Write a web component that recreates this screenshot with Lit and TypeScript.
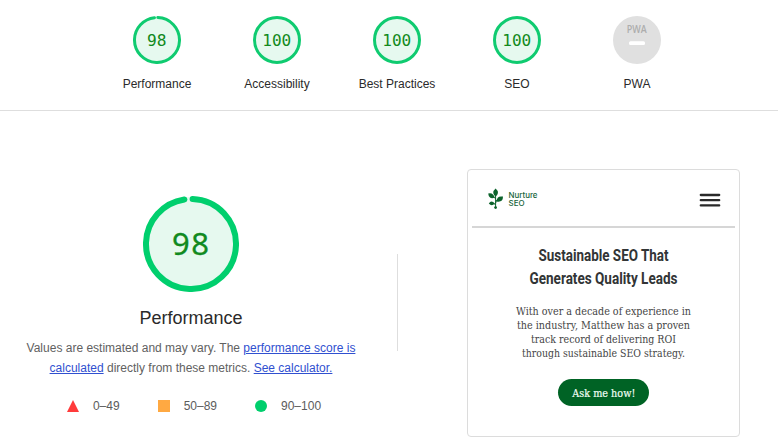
import { LitElement, html, svg, css } from "lit";
import { customElement, property } from "lit/decorators.js";

@customElement("score-gauge")
class ScoreGauge extends LitElement {
  @property({ type: Number }) score = 100;
  @property({ type: Boolean, reflect: true }) large = false;

  static styles = css`
    :host { display: block; width: 48px; height: 48px; }
    :host([large]) { width: 96px; height: 96px; }
    svg { display: block; width: 100%; height: 100%; }
    .base { fill: #e6f9ef; }
    .arc { fill: none; stroke: #0fcb70; stroke-linecap: round; }
    :host([large]) .arc { stroke: #00cf6d; }
    text { fill: #118a20; text-anchor: middle; font-family: "DejaVu Sans Mono", monospace; font-size: 16px; }
    .big { font-family: "Noto Sans", sans-serif; font-size: 31px; stroke: #118a20; stroke-width: 0.3px; }
  `;

  render() {
    const size = this.large ? 96 : 48;
    const stroke = this.large ? 6 : 3;
    const r = size / 2 - stroke / 2;
    const c = 2 * Math.PI * r;
    const full = this.score === 100;
    const dash = full ? c : c * 0.98 - stroke / 2;
    const h = size / 2;
    return html`<svg viewBox="0 0 ${size} ${size}">
      <circle class="base" cx=${h} cy=${h} r=${h - 1}></circle>
      <circle class="arc" cx=${h} cy=${h} r=${r} stroke-width=${stroke}
        stroke-dasharray="${dash} ${full ? 0 : c}"
        transform="rotate(${full ? -90 : -88} ${h} ${h})"></circle>
      ${this.large
        ? svg`<text class="big" x="47.5" y="58.7" textLength="37">${this.score}</text>`
        : svg`<text x="23.8" y="30" textLength=${full ? 29 : 19.5} lengthAdjust="spacingAndGlyphs">${this.score}</text>`}
    </svg>`;
  }
}

@customElement("site-preview")
class SitePreview extends LitElement {
  static styles = css`
    :host { display: block; box-sizing: border-box; width: 273px; height: 268px; border: 1px solid #dcdcdc; border-radius: 4px; padding: 0 4px; }
    header { display: flex; align-items: center; justify-content: space-between; height: 56px; padding: 0 15px; border-bottom: 2px solid #d6d6d6; }
    .brand { display: flex; align-items: center; gap: 5px; padding-top: 2px; }
    .menu { display: block; margin-top: 5px; }
    svg { display: block; overflow: visible; }
    .logo { fill: #0c632c; }
    .stem { fill: none; stroke: #0c632c; stroke-width: 1; }
    .name { width: 32px; height: 22px; }
    .name text { fill: #16633a; font: 500 7.6px Inter, sans-serif; }
    .title { fill: #323536; font: 700 17px Roboto, sans-serif; }
    .copy { fill: #454545; font: 10.5px "DejaVu Serif", serif; }
    .mid { text-anchor: middle; }
    .button { display: flex; align-items: center; justify-content: center; width: 91px; height: 27px; margin: 0 auto; border-radius: 14px; background: #006325; }
    .button text { fill: #f2fff5; stroke: #f2fff5; stroke-width: 0.2px; font: 11px "DejaVu Serif", serif; }
  `;

  private titles = [
    { t: "Sustainable SEO That", y: 33.2, w: 130 },
    { t: "Generates Quality Leads", y: 56.2, w: 148 },
  ];
  private copy = [
    { t: "With over a decade of experience in", y: 87, w: 175 },
    { t: "the industry, Matthew has a proven", y: 101, w: 173 },
    { t: "track record of delivering ROI", y: 115, w: 145 },
    { t: "through sustainable SEO strategy.", y: 129, w: 163 },
  ];

  render() {
    return html`
      <header>
        <div class="brand">
          <svg width="17" height="22" viewBox="0 18 17 22">
            <path class="stem" d="M8.6 22V37M8.6 33Q9 29.5 12 28.5M8.6 29Q8 26.5 5 25.5M8.6 34.5L5.5 33"></path>
            <path class="logo" d="M8.6 18.4Q4 22.4 8.6 26.6Q13.2 22.4 8.6 18.4ZM1.2 23.4Q2 29.4 7.4 27.8Q6.6 22.2 1.2 23.4ZM16 26.6Q9.6 25.4 9.6 31.6Q16 32.8 16 26.6ZM1.8 33.4Q4.6 36.8 7.8 33.6Q4.4 29.6 1.8 33.4Z"></path>
            <circle class="logo" cx="8.6" cy="37.6" r="1.4"></circle>
          </svg>
          <svg class="name" viewBox="0 0 32 22">
            <text x="-0.5" y="9.8" textLength="29" lengthAdjust="spacingAndGlyphs">Nurture</text>
            <text x="-0.5" y="17.8" textLength="16" lengthAdjust="spacingAndGlyphs">SEO</text>
          </svg>
        </div>
        <svg class="menu" width="20" height="15" viewBox="0 0 20 15">
          <path d="M0.8 2H19.2M0.8 7.2H19.2M0.8 12.4H19.2" stroke="#292929" stroke-width="2.3" stroke-linecap="round"></path>
        </svg>
      </header>
      <svg width="263" height="151" viewBox="0 0 263 151">
        ${this.titles.map((l) => svg`<text class="title mid" x="131.5" y=${l.y} textLength=${l.w} lengthAdjust="spacingAndGlyphs">${l.t}</text>`)}
        ${this.copy.map((l) => svg`<text class="copy mid" x="131.5" y=${l.y} textLength=${l.w} lengthAdjust="spacingAndGlyphs">${l.t}</text>`)}
      </svg>
      <div class="button">
        <svg width="80" height="20"><text class="mid" x="39.8" y="13.9" textLength="63" lengthAdjust="spacingAndGlyphs">Ask me how!</text></svg>
      </div>`;
  }
}

@customElement("app-root")
class AppRoot extends LitElement {
  static styles = css`
    :host { display: block; width: 778px; height: 448px; overflow: hidden; background: #fff; color: #2a2a2a; font-family: "Liberation Sans", Arial, sans-serif; font-size: 12px; }
    .scores { display: flex; box-sizing: border-box; height: 111px; padding: 16px 0 0 97px; border-bottom: 1px solid #dedede; }
    .score { display: flex; flex-direction: column; align-items: center; width: 120px; gap: 12px; line-height: 16px; }
    .pwa { display: block; width: 48px; height: 48px; }
    .pwa text { font: 600 10.5px "Open Sans", sans-serif; fill: #adadad; text-anchor: middle; }
    .main { display: flex; height: 337px; }
    .summary { display: flex; flex-direction: column; align-items: center; width: 382px; padding-top: 85px; }
    h1 { margin: 15px 0 0; font-size: 18px; line-height: 22px; font-weight: 400; }
    p { margin: 9px 0 0; color: #616161; line-height: 20px; text-align: center; white-space: nowrap; }
    a { color: #3050d0; text-decoration: underline; }
    .legend { display: flex; margin: 20px 0 0 6px; gap: 38px; color: #5c5c5c; line-height: 16px; }
    .key { display: flex; align-items: center; gap: 14px; }
    .key svg { display: block; width: 12px; height: 12px; }
    .rule { width: 1px; height: 97px; margin: 143px 69px 0 15px; background: #dedede; }
    site-preview { margin-top: 58px; }
  `;

  private scores = [
    { label: "Performance", value: 98 },
    { label: "Accessibility", value: 100 },
    { label: "Best Practices", value: 100 },
    { label: "SEO", value: 100 },
  ];

  render() {
    return html`
      <div class="scores">
        ${this.scores.map((s) => html`<div class="score"><score-gauge .score=${s.value}></score-gauge><span>${s.label}</span></div>`)}
        <div class="score">
          <svg class="pwa" viewBox="0 0 48 48">
            <circle cx="24" cy="24" r="24" fill="#e0e0e0"></circle>
            <text x="23.7" y="17.3" textLength="20" lengthAdjust="spacingAndGlyphs">PWA</text>
            <rect x="16" y="25.2" width="16" height="3.8" rx="1.5" fill="#fff"></rect>
          </svg>
          <span>PWA</span>
        </div>
      </div>
      <div class="main">
        <div class="summary">
          <score-gauge large .score=${98}></score-gauge>
          <h1>Performance</h1>
          <p>Values are estimated and may vary. The <a>performance score is</a><br /><a>calculated</a> directly from these metrics. <a>See calculator.</a></p>
          <div class="legend">
            <div class="key"><svg viewBox="0 0 12 12"><path d="M6 0L12 12H0Z" fill="#ff3b3b"></path></svg>0–49</div>
            <div class="key"><svg viewBox="0 0 12 12"><rect width="12" height="12" fill="#ffa942"></rect></svg>50–89</div>
            <div class="key"><svg viewBox="0 0 12 12"><circle cx="6" cy="6" r="6" fill="#00cf6d"></circle></svg>90–100</div>
          </div>
        </div>
        <div class="rule"></div>
        <site-preview></site-preview>
      </div>`;
  }
}
